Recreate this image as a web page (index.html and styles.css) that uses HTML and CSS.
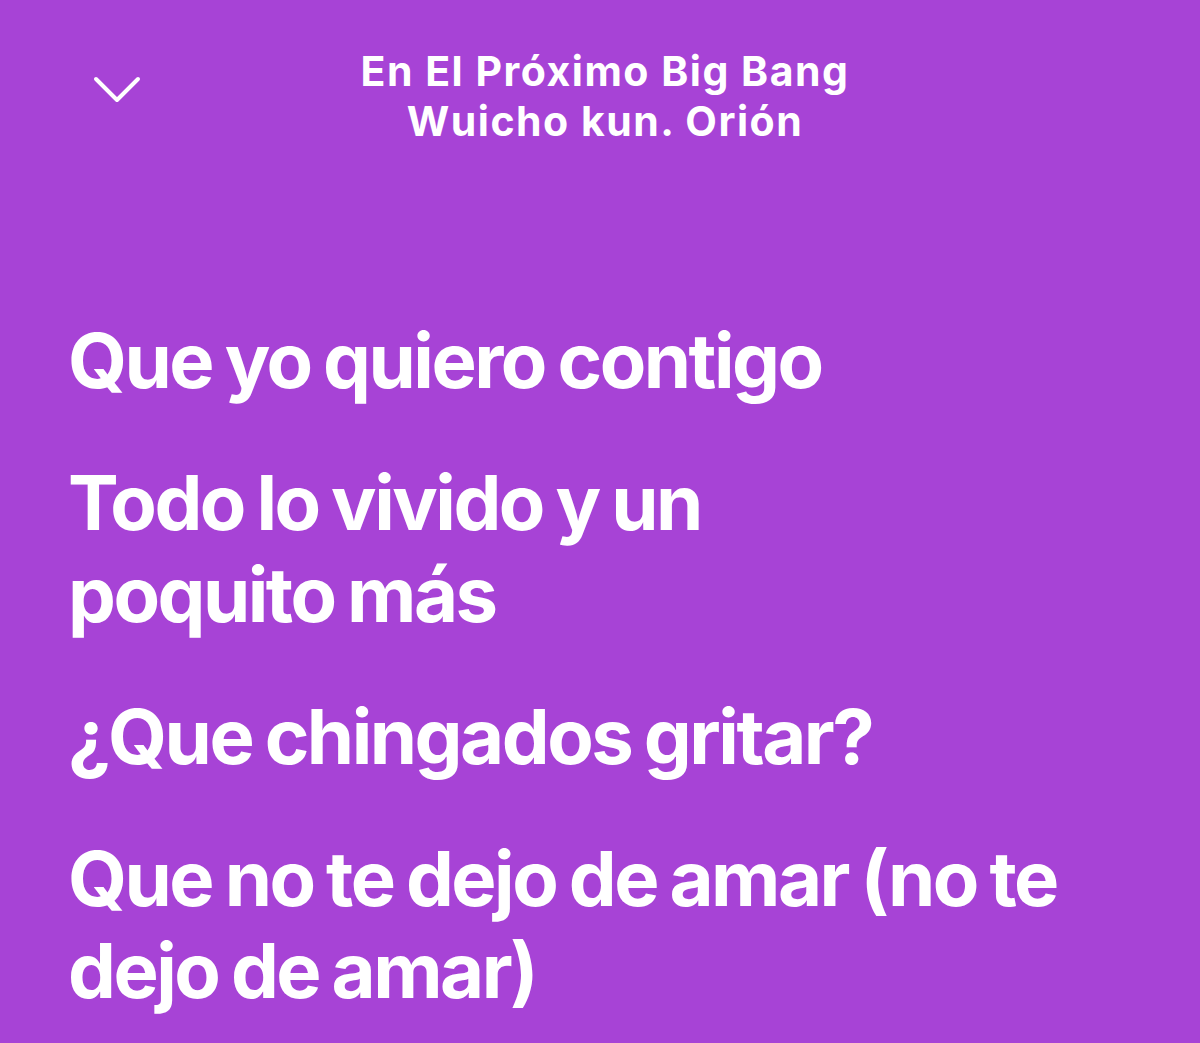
FILE: index.html
```html
<!DOCTYPE html>
<html lang="es">
  <head>
    <meta charset="UTF-8" />
    <meta name="viewport" content="width=device-width, initial-scale=1.0" />
    <title>En El Próximo Big Bang · Letra</title>
    <link rel="stylesheet" href="styles.css">
  </head>
  <body>
    <div class="lyrics-screen">
      <header class="now-playing">
        <button class="close-button" aria-label="Cerrar">
          <svg width="48" height="30" viewBox="0 0 48 30">
            <polyline points="3,3 24,24 45,3" fill="none" stroke="#fff" stroke-width="4" stroke-linecap="round" stroke-linejoin="round" />
          </svg>
        </button>
        <div class="track-info">
          <div class="track-title">En El Próximo Big Bang</div>
          <div class="track-artist">Wuicho kun. Orión</div>
        </div>
        <div class="spacer"></div>
      </header>

      <main class="lyrics">
        <p class="lyric-line">Que yo quiero contigo</p>
        <p class="lyric-line">Todo lo vivido y un<br />poquito más</p>
        <p class="lyric-line">¿Que chingados gritar?</p>
        <p class="lyric-line">Que no te dejo de amar (no te<br />dejo de amar)</p>
      </main>
    </div>
  </body>
</html>
```

FILE: styles.css
```css
body {
  margin: 0;
  background-color: #a743d6;
  color: #ffffff;
  font-family: Inter, "Noto Sans", sans-serif;
  height: 100vh;
  overflow: hidden;
}
.lyrics-screen {
  display: flex;
  flex-direction: column;
}
.now-playing {
  display: grid;
  grid-template-columns: 1fr auto 1fr;
  align-items: start;
  padding: 46px 0 0 10px;
}
.close-button {
  justify-self: start;
  margin: 30px 0 0 83px;
  padding: 0;
  border: none;
  background: none;
  cursor: pointer;
  line-height: 0;
}
.track-info {
  text-align: center;
  font-weight: 700;
  font-size: 41px;
  line-height: 50px;
  letter-spacing: 1.5px;
}
.lyrics {
  padding: 168px 0 0 68px;
}
.lyric-line {
  margin: 0 0 50px;
  font-weight: 700;
  font-size: 76px;
  line-height: 92px;
  letter-spacing: -2.5px;
  word-spacing: -3px;
  white-space: nowrap;
}
```
